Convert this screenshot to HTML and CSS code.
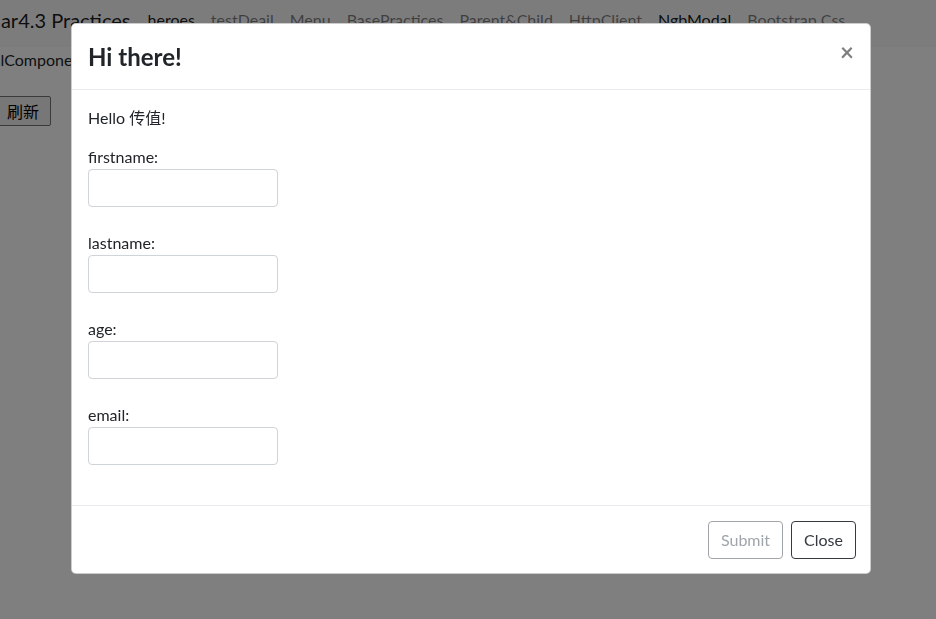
FILE: index.html
```html
<!DOCTYPE html>
<html lang="en">
<head>
  <meta charset="UTF-8" />
  <meta name="viewport" content="width=device-width, initial-scale=1.0" />
  <title>Angular4.3 Practices</title>
  <link rel="stylesheet" href="styles.css">
</head>
<body>
  <div class="page">
    <nav class="navbar">
      <a class="brand" href="#">Angular4.3 Practices</a>
      <ul class="nav">
        <li><a class="nav-link active" href="#">heroes</a></li>
        <li><a class="nav-link" href="#">testDeail</a></li>
        <li><a class="nav-link" href="#">Menu</a></li>
        <li><a class="nav-link" href="#">BasePractices</a></li>
        <li><a class="nav-link" href="#">Parent&amp;Child</a></li>
        <li><a class="nav-link" href="#">HttpClient</a></li>
        <li><a class="nav-link active" href="#">NgbModal</a></li>
        <li><a class="nav-link" href="#">Bootstrap Css</a></li>
      </ul>
    </nav>

    <main class="content">
      <p class="intro">NgbModalComponent works!</p>
      <button class="refresh">刷新</button>
    </main>
  </div>

  <div class="backdrop"></div>

  <div class="modal">
    <div class="modal-header">
      <h4 class="modal-title">Hi there!</h4>
      <button class="close" aria-label="Close">&times;</button>
    </div>

    <div class="modal-body">
      <p class="greeting">Hello 传值!</p>
      <form>
        <div class="form-group">
          <label for="firstname">firstname:</label>
          <input id="firstname" class="form-control" type="text" />
        </div>
        <div class="form-group">
          <label for="lastname">lastname:</label>
          <input id="lastname" class="form-control" type="text" />
        </div>
        <div class="form-group">
          <label for="age">age:</label>
          <input id="age" class="form-control" type="text" />
        </div>
        <div class="form-group">
          <label for="email">email:</label>
          <input id="email" class="form-control" type="text" />
        </div>
      </form>
    </div>

    <div class="modal-footer">
      <button class="btn btn-submit" disabled>Submit</button>
      <button class="btn btn-close">Close</button>
    </div>
  </div>
</body>
</html>
```

FILE: styles.css
```css
* {
  box-sizing: border-box;
}

body {
  margin: 0;
  padding: 0;
  font-family: Lato, "Noto Sans CJK SC", sans-serif;
  font-size: 16px;
  line-height: 24px;
  color: #212529;
  background: #fff;
  overflow: hidden;
  height: 100vh;
}

.page {
  margin-left: -66px;
}

.navbar {
  display: flex;
  align-items: flex-start;
  height: 47px;
  padding: 5px 16px 0;
  background-color: #f8f9fa;
}

.brand {
  font-size: 20px;
  line-height: 30px;
  color: rgba(0, 0, 0, 0.9);
  text-decoration: none;
  margin-right: 9px;
  white-space: nowrap;
}

.nav {
  display: flex;
  list-style: none;
  margin: 0;
  padding: 3px 0 0;
}

.nav-link {
  display: block;
  padding: 0 8px;
  color: rgba(0, 0, 0, 0.5);
  text-decoration: none;
  white-space: nowrap;
}

.nav-link.active {
  color: rgba(0, 0, 0, 0.9);
}

.content {
  padding-top: 1px;
}

.intro {
  margin: 0 0 24px -3px;
  line-height: 24px;
  white-space: nowrap;
}

.refresh {
  margin-left: 61px;
  padding: 3px 11px;
  font-family: "Noto Sans CJK SC", sans-serif;
  font-size: 16px;
  line-height: 22px;
  color: #000;
  background-color: #efefef;
  border: 1px solid #767676;
  border-radius: 2px;
}

.backdrop {
  position: fixed;
  top: 0;
  left: 0;
  width: 100%;
  height: 100%;
  background-color: rgba(0, 0, 0, 0.5);
}

.modal {
  position: fixed;
  top: 23px;
  left: 71px;
  width: 800px;
  background-color: #fff;
  border: 1px solid rgba(0, 0, 0, 0.2);
  border-radius: 5px;
  display: flex;
  flex-direction: column;
}

.modal-header {
  display: flex;
  align-items: flex-start;
  padding: 17px 16px 16px;
  border-bottom: 1px solid #e9ecef;
}

.modal-title {
  margin: 0;
  font-size: 24px;
  line-height: 32px;
  font-weight: 700;
}

.close {
  margin: -17px -16px -16px auto;
  padding: 16px;
  background: transparent;
  border: 0;
  font-family: Lato, sans-serif;
  font-size: 24px;
  line-height: 24px;
  font-weight: 700;
  color: #000;
  opacity: 0.5;
}

.modal-body {
  padding: 16px;
}

.greeting {
  margin: 0 0 15px;
}

.form-group {
  display: flex;
  flex-direction: column;
  align-items: flex-start;
  margin-bottom: 24px;
}

.form-control {
  width: 190px;
  height: 38px;
  border: 1px solid #ced4da;
  border-radius: 4px;
  font: inherit;
  padding: 6px 12px;
}

.modal-footer {
  display: flex;
  justify-content: flex-end;
  gap: 8px;
  padding: 15px 14px 14px;
  border-top: 1px solid #e9ecef;
}

.btn {
  height: 38px;
  padding: 6px 12px;
  font-family: inherit;
  font-size: 16px;
  line-height: 24px;
  background: transparent;
  border: 1px solid;
  border-radius: 4px;
}

.btn-submit {
  color: #6c757d;
  border-color: #6c757d;
  opacity: 0.65;
}

.btn-close {
  color: #343a40;
  border-color: #343a40;
}
```
